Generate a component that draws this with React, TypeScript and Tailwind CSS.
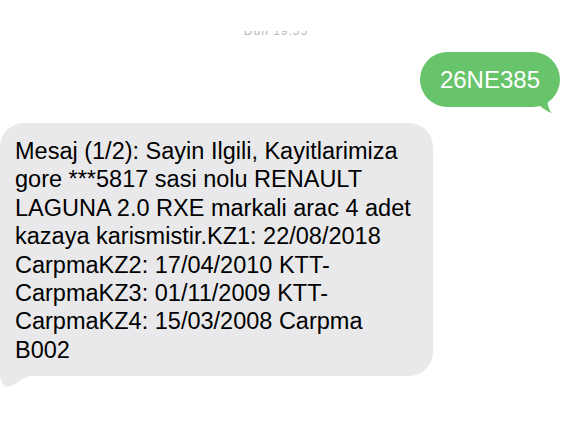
import React from 'react'

const font = { fontFamily: '"Liberation Sans", Arial, Helvetica, sans-serif' }

const lines = [
  'Mesaj (1/2): Sayin Ilgili, Kayitlarimiza',
  'gore ***5817 sasi nolu RENAULT',
  'LAGUNA 2.0 RXE markali arac 4 adet',
  'kazaya karismistir.KZ1: 22/08/2018',
  'CarpmaKZ2: 17/04/2010 KTT-',
  'CarpmaKZ3: 01/11/2009 KTT-',
  'CarpmaKZ4: 15/03/2008 Carpma',
  'B002',
]

export default function App() {
  return (
    <div className="w-[580px] h-[435px] bg-white overflow-hidden" style={font}>
      {/* timestamp, mostly hidden under the header */}
      <div className="pt-[31px]">
        <div className="h-[7px] overflow-hidden flex items-end justify-center pr-[28px]">
          <span className="text-[12px] leading-[14px] text-[#b8b8bc] tracking-[1px]">Dün 19:55</span>
        </div>
      </div>

      {/* outgoing */}
      <div className="flex justify-end pr-[20px] mt-[14px]">
        <div className="relative">
          <svg className="absolute right-[6px] top-[40px]" width="22" height="22" viewBox="0 0 22 22">
            <path d="M2 4 C8 8 10 10 8 14 C12 17 16 20 20 21 C16 17 15 12 16 2 Z" fill="#68c46a" />
          </svg>
          <div className="relative h-[55px] px-[20px] rounded-full bg-[#68c46a] text-white text-[24px] flex items-center">
            26NE385
          </div>
        </div>
      </div>

      {/* incoming */}
      <div className="mt-[16px] relative w-[433px]">
        <svg className="absolute left-0 top-[232px]" width="30" height="34" viewBox="0 0 30 34">
          <path d="M0 0 L0 20 C0 25 2 29 5 32 C12 31 18 28 22 24 L28 22 L28 0 Z" fill="#e9e9eb" />
        </svg>
        <div className="relative bg-[#e9e9eb] rounded-[24px] pl-[15px] pr-[10px] pt-[14px] pb-[12px] text-[23.5px] leading-[28.4px] text-black">
          {lines.map((l, i) => (
            <div key={i} className="whitespace-nowrap">{l}</div>
          ))}
        </div>
      </div>
    </div>
  )
}
